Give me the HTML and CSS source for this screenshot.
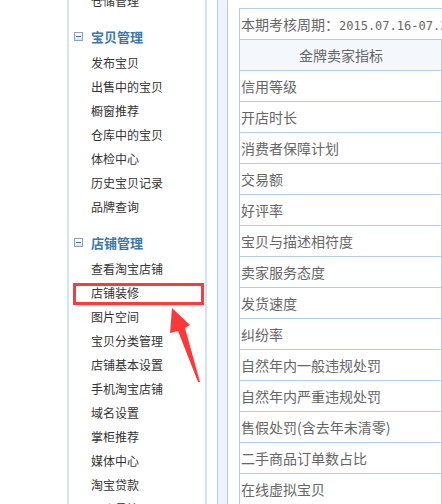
FILE: index.html
```html
<!DOCTYPE html>
<html lang="zh-CN">
<head>
    <meta charset="UTF-8">
    <meta name="viewport" content="width=device-width, initial-scale=1.0">
    <title>卖家中心</title>
    <link rel="stylesheet" href="styles.css">
</head>
<body>
    <div class="page">
        <div class="sidebar">
            <ul class="menu first">
                <li>仓储管理</li>
            </ul>
            <h3 class="group-title"><span class="toggle"></span>宝贝管理</h3>
            <ul class="menu">
                <li>发布宝贝</li>
                <li>出售中的宝贝</li>
                <li>橱窗推荐</li>
                <li>仓库中的宝贝</li>
                <li>体检中心</li>
                <li>历史宝贝记录</li>
                <li>品牌查询</li>
            </ul>
            <h3 class="group-title"><span class="toggle"></span>店铺管理</h3>
            <ul class="menu">
                <li>查看淘宝店铺</li>
                <li>店铺装修</li>
                <li>图片空间</li>
                <li>宝贝分类管理</li>
                <li>店铺基本设置</li>
                <li>手机淘宝店铺</li>
                <li>域名设置</li>
                <li>掌柜推荐</li>
                <li>媒体中心</li>
                <li>淘宝贷款</li>
                <li>子账号管理</li>
            </ul>
        </div>
        <div class="splitter"></div>
        <div class="main">
            <table class="rules">
                <colgroup>
                    <col class="col-name">
                    <col class="col-req">
                </colgroup>
                <tr>
                    <td colspan="2" class="period">本期考核周期：<span class="date">2015.07.16-07.31</span></td>
                </tr>
                <tr class="head">
                    <td>金牌卖家指标</td>
                    <td>考核要求</td>
                </tr>
                <tr><td>信用等级</td><td></td></tr>
                <tr><td>开店时长</td><td></td></tr>
                <tr><td>消费者保障计划</td><td></td></tr>
                <tr><td>交易额</td><td></td></tr>
                <tr><td>好评率</td><td></td></tr>
                <tr><td>宝贝与描述相符度</td><td></td></tr>
                <tr><td>卖家服务态度</td><td></td></tr>
                <tr><td>发货速度</td><td></td></tr>
                <tr><td>纠纷率</td><td></td></tr>
                <tr><td>自然年内一般违规处罚</td><td></td></tr>
                <tr><td>自然年内严重违规处罚</td><td></td></tr>
                <tr><td>售假处罚(含去年未清零)</td><td></td></tr>
                <tr><td>二手商品订单数占比</td><td></td></tr>
                <tr><td>在线虚拟宝贝</td><td></td></tr>
            </table>
        </div>

        <div class="mark-box"></div>
        <svg class="mark-arrow" width="40" height="80" viewBox="0 0 40 80">
            <polygon points="4,0 22,17 17,20 32,74 30,74 10,23 2,25" fill="#fc3838"/>
        </svg>
    </div>
</body>
</html>
```

FILE: styles.css
```css
html, body {
    margin: 0;
    padding: 0;
    height: 100%;
    overflow: hidden;
    background: #fff;
}
.page {
    position: relative;
    display: flex;
    height: 504px;
    padding-left: 67px;
    overflow: hidden;
    font-family: "Noto Sans CJK SC", "DejaVu Sans", sans-serif;
}
.sidebar {
    width: 136px;
    flex: none;
    border-left: 2px solid #d5e3f2;
    border-right: 2px solid #d5e3f2;
}
.menu {
    list-style: none;
    margin: 0;
    padding: 0 0 0 22px;
}
.menu.first {
    margin-top: -11px;
}
.menu li {
    font-size: 12px;
    line-height: 24px;
    height: 24px;
    color: #333;
    white-space: nowrap;
}
.group-title {
    display: flex;
    align-items: center;
    margin: 11px 0 3px 0;
    padding-left: 5px;
    height: 24px;
    font-size: 13px;
    font-weight: bold;
    color: #3c78a8;
}
.toggle {
    position: relative;
    width: 7px;
    height: 7px;
    margin-right: 8px;
    border: 1px solid #86a3c0;
    background: linear-gradient(#ffffff, #dbe4ee);
}
.toggle::after {
    content: "";
    position: absolute;
    left: 1px;
    top: 3px;
    width: 5px;
    height: 1px;
    background: #4f6f90;
}
.splitter {
    flex: none;
    width: 9px;
    margin: 0 11px 0 10px;
    border-left: 1px solid #b2cbe6;
    border-right: 1px solid #b2cbe6;
    background: #ecf3fc;
}
.main {
    flex: none;
    padding-top: 8px;
}
.rules {
    border-collapse: collapse;
    table-layout: fixed;
    width: 402px;
    font-size: 14px;
    color: #666;
}
.col-name {
    width: 202px;
}
.col-req {
    width: 200px;
}
.rules td {
    border: 1px solid #b3cde9;
    padding: 0 0 0 1px;
    height: 30px;
    line-height: 30px;
    white-space: nowrap;
    overflow: hidden;
}
.rules .period {
    overflow: visible;
}
.date {
    font-family: "DejaVu Sans Mono", "Liberation Mono", monospace;
    font-size: 12px;
    line-height: 12px;
}
.rules .head td {
    background: #f4f8fd;
    text-align: center;
}
.mark-box {
    position: absolute;
    left: 73px;
    top: 283px;
    width: 131px;
    height: 22px;
    box-sizing: border-box;
    border: 3px solid #fd3b3b;
}
.mark-arrow {
    position: absolute;
    left: 168px;
    top: 308px;
}
```
